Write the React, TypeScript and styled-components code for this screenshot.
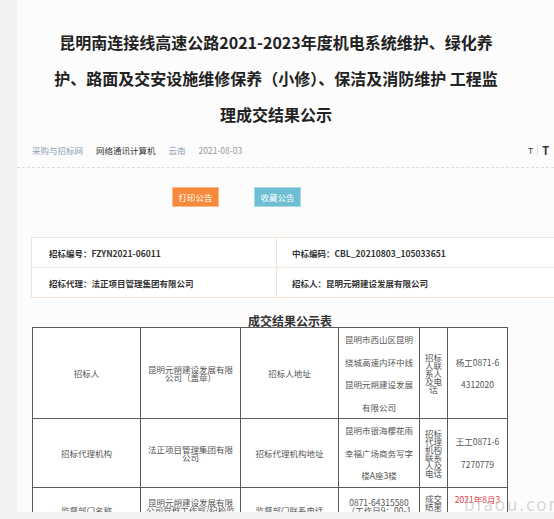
import React from 'react';
import styled, { createGlobalStyle } from 'styled-components';

const GlobalStyle = createGlobalStyle`
  html, body {
    margin: 0;
    padding: 0;
    background-color: #f2f2f2;
    font-family: "Noto Sans CJK SC", "Noto Sans", sans-serif;
  }
`;

interface ResultRow {
  label: string;
  name: string;
  addrLabel: string;
  addr: string;
  contactLabel: string;
  contact: string;
  tightAddr?: boolean;
  red?: boolean;
}

const rows: ResultRow[] = [
  {
    label: '招标人',
    name: '昆明元朔建设发展有限公司（盖章）',
    addrLabel: '招标人地址',
    addr: '昆明市西山区昆明绕城高速内环中线昆明元朔建设发展有限公司',
    contactLabel: '招标人联系人及电话',
    contact: '杨工0871-64312020',
  },
  {
    label: '招标代理机构',
    name: '法正项目管理集团有限公司',
    addrLabel: '招标代理机构地址',
    addr: '昆明市银海樱花雨幸福广场商务写字楼A座3楼',
    contactLabel: '招标代理机构联系人及电话',
    contact: '王工0871-67270779',
  },
  {
    label: '监督部门名称',
    name: '昆明元朔建设发展有限公司党群工作部/纪检监察室',
    addrLabel: '监督部门联系电话',
    addr: '0871-64315580（工作日9：00-12：00）',
    contactLabel: '成交结果公示日期',
    contact: '2021年8月3日',
    tightAddr: true,
    red: true,
  },
];

const App: React.FC = () => {
  return (
    <>
      <GlobalStyle />
      <Page>
        <Content>
          <Title>
            昆明南连接线高速公路2021-2023年度机电系统维护、绿化养
            <br />
            护、路面及交安设施维修保养（小修）、保洁及消防维护 工程监
            <br />
            理成交结果公示
          </Title>

          <MetaBar>
            <MetaLinks>
              <MetaLink>采购与招标网</MetaLink>
              <MetaText>网络通讯计算机</MetaText>
              <MetaLink>云南</MetaLink>
              <MetaDate>2021-08-03</MetaDate>
            </MetaLinks>
            <FontSwitch>
              <SmallT>T</SmallT>
              <SwitchDivider />
              <BigT>T</BigT>
            </FontSwitch>
          </MetaBar>

          <Divider />

          <ButtonRow>
            <ActionButton tone="orange">打印公告</ActionButton>
            <ActionButton tone="blue">收藏公告</ActionButton>
          </ButtonRow>

          <InfoBox>
            <InfoRow>
              <InfoCell>招标编号：FZYN2021-06011</InfoCell>
              <InfoCell>中标编码：CBL_20210803_105033651</InfoCell>
            </InfoRow>
            <InfoRow>
              <InfoCell>招标代理：法正项目管理集团有限公司</InfoCell>
              <InfoCell>招标人：昆明元朔建设发展有限公司</InfoCell>
            </InfoRow>
          </InfoBox>

          <TableTitle>成交结果公示表</TableTitle>

          <TableWrap>
            <ResultTable>
              <colgroup>
                <col style={{ width: 108 }} />
                <col style={{ width: 100 }} />
                <col style={{ width: 98 }} />
                <col style={{ width: 81 }} />
                <col style={{ width: 28 }} />
                <col style={{ width: 60 }} />
              </colgroup>
              <tbody>
                {rows.map((r) => (
                  <tr key={r.label}>
                    <Cell>{r.label}</Cell>
                    <Cell tight>{r.name}</Cell>
                    <Cell>{r.addrLabel}</Cell>
                    <Cell loose={!r.tightAddr} tight={r.tightAddr}>
                      {r.addr}
                    </Cell>
                    <NarrowCell>{r.contactLabel}</NarrowCell>
                    <Cell loose red={r.red}>
                      {r.contact}
                    </Cell>
                  </tr>
                ))}
              </tbody>
            </ResultTable>
            <Watermark>biaou.com</Watermark>
          </TableWrap>
        </Content>
      </Page>
    </>
  );
};

const Page = styled.div`
  padding-left: 17px;
  height: 519px;
  overflow: hidden;
`;

const Content = styled.div`
  width: 537px;
  height: 512px;
  overflow: hidden;
  background-color: #fcfcfc;
  padding-top: 24px;
  box-sizing: border-box;
`;

const Title = styled.h1`
  margin: 0 0 0 19px;
  width: 480px;
  white-space: nowrap;
  text-align: center;
  font-size: 16px;
  line-height: 36px;
  font-weight: 700;
  color: #222;
`;

const MetaBar = styled.div`
  margin-top: 11px;
  height: 14px;
  padding: 0 5px 0 15px;
  display: flex;
  align-items: center;
  justify-content: space-between;
  font-size: 8.5px;
`;

const MetaLinks = styled.div`
  display: flex;
  align-items: center;
  gap: 13px;
`;

const MetaLink = styled.span`
  color: #8fa1b7;
`;

const MetaText = styled.span`
  color: #333;
`;

const MetaDate = styled.span`
  color: #999;
`;

const FontSwitch = styled.div`
  display: flex;
  align-items: center;
  gap: 4px;
  color: #333;
`;

const SmallT = styled.span`
  font-size: 8px;
`;

const BigT = styled.span`
  font-size: 11px;
  font-weight: 700;
`;

const SwitchDivider = styled.span`
  width: 1px;
  height: 10px;
  background-color: #ddd;
`;

const Divider = styled.div`
  margin-top: 10px;
  border-top: 1px dashed #dedede;
`;

const ButtonRow = styled.div`
  margin-top: 19px;
  padding-left: 155px;
  display: flex;
  gap: 35px;
`;

const ActionButton = styled.button<{ tone: 'orange' | 'blue' }>`
  width: 47px;
  height: 20px;
  padding: 0;
  font-family: inherit;
  font-size: 8.5px;
  color: #fff;
  cursor: pointer;
  background-color: ${({ tone }) => (tone === 'orange' ? '#f7893b' : '#6dbdd3')};
  border: 1px solid ${({ tone }) => (tone === 'orange' ? '#fbb98a' : '#a9d8e6')};
`;

const InfoBox = styled.div`
  margin: 30px 0 0 14px;
  width: 560px;
  background-color: #fff;
  border: 1px solid #f3e4d9;
`;

const InfoRow = styled.div`
  display: grid;
  grid-template-columns: 244px 1fr;
  height: 29px;

  & + & {
    border-top: 1px solid #f3e4d9;
  }
`;

const InfoCell = styled.div`
  display: flex;
  align-items: center;
  padding-left: 17px;
  font-size: 8.5px;
  font-weight: 700;
  color: #333;

  & + & {
    border-left: 1px solid #f3e4d9;
    padding-left: 15px;
  }
`;

const TableTitle = styled.div`
  margin: 17px 0 0 14px;
  width: 518px;
  text-align: center;
  font-size: 12px;
  line-height: 12px;
  font-weight: 700;
  color: #333;
`;

const TableWrap = styled.div`
  position: relative;
  margin-left: 15px;
`;

const ResultTable = styled.table`
  width: 475px;
  table-layout: fixed;
  border-collapse: collapse;
  background-color: #fff;
`;

const Cell = styled.td<{ tight?: boolean; loose?: boolean; red?: boolean }>`
  border: 1px solid #5a5a5a;
  padding: 0 5px;
  text-align: center;
  vertical-align: middle;
  font-size: 8.5px;
  color: ${({ red }) => (red ? '#e23b3b' : '#555')};
  word-break: break-all;
  line-height: ${({ tight, loose }) => (tight ? '8px' : loose ? '22.5px' : '12px')};
  ${({ loose }) => loose && 'padding: 0 6px;'}
`;

const NarrowCell = styled.td`
  border: 1px solid #5a5a5a;
  padding: 4px 4px;
  text-align: center;
  vertical-align: middle;
  font-size: 8.5px;
  line-height: 8px;
  color: #555;
  word-break: break-all;
`;

const Watermark = styled.div`
  position: absolute;
  left: 432px;
  top: 164px;
  font-size: 17px;
  letter-spacing: 2px;
  color: rgba(190, 190, 190, 0.6);
  white-space: nowrap;
  pointer-events: none;
`;

export default App;
